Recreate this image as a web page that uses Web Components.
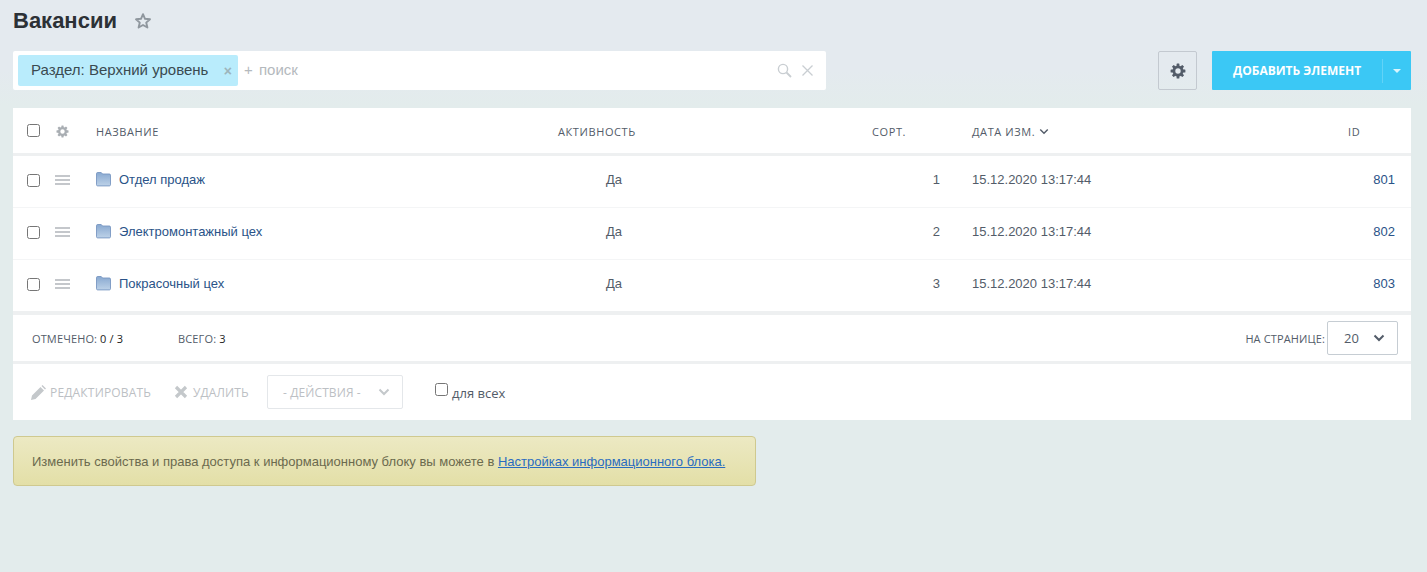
<!DOCTYPE html>
<html lang="ru"><head><meta charset="utf-8"><title>Вакансии</title>
<style>
html,body{margin:0;height:100%}
body{height:572px;overflow:hidden;background:linear-gradient(180deg,#e4eaef 0,#e4eaef 70px,#e3ecec 105px,#e3ecec 100%);font-family:"Liberation Sans",Arial,sans-serif;color:#333}
</style></head><body>
<admin-page>
  <page-title slot="title">Вакансии</page-title>
  <tool-bar slot="tools"></tool-bar>
  <data-grid slot="grid">
    <grid-row kind="head"></grid-row>
    <grid-row name="Отдел продаж" sort="1" num="801"></grid-row>
    <grid-row name="Электромонтажный цех" sort="2" num="802"></grid-row>
    <grid-row name="Покрасочный цех" sort="3" num="803" last></grid-row>
    <grid-stats></grid-stats>
    <grid-actions></grid-actions>
  </data-grid>
  <note-box slot="note">Изменить свойства и права доступа к информационному блоку вы можете в <a href="#">Настройках информационного блока.</a></note-box>
</admin-page>
<script>
const gear=(s,c)=>{let t='';for(let i=0;i<8;i++)t+=`<rect x="6.6" y="0.6" width="2.8" height="3.4" rx=".5" transform="rotate(${i*45} 8 8)"/>`;
return `<svg width="${s}" height="${s}" viewBox="0 0 16 16" fill="${c}" style="display:block">${t}<circle cx="8" cy="8" r="4.1" fill="none" stroke="${c}" stroke-width="2.8"/></svg>`};
const chev=(w,c,sw)=>`<svg width="${w}" height="${Math.round(w*.65)}" viewBox="0 0 12 8" style="display:block"><path d="M1.5 1.5 6 6l4.5-4.5" fill="none" stroke="${c}" stroke-width="${sw}"/></svg>`;
class Base extends HTMLElement{
  render(css,html){const r=this.shadowRoot||this.attachShadow({mode:'open'});r.innerHTML=`<style>${css}</style>${html}`;}
}
customElements.define('admin-page',class extends Base{connectedCallback(){this.render(`
:host{display:flex;flex-direction:column;padding:0 16px 0 13px;box-sizing:border-box;height:572px}
.t{height:51px}.b{height:39px;margin-bottom:18px}.g{margin-bottom:16px}
`,`<div class="t"><slot name="title"></slot></div><div class="b"><slot name="tools"></slot></div><div class="g"><slot name="grid"></slot></div><slot name="note"></slot>`)}});
customElements.define('page-title',class extends Base{connectedCallback(){this.render(`
:host{display:flex;align-items:center;height:41px;font:bold 22px/41px "Liberation Sans",sans-serif;color:#2c3136;gap:17px}
svg{display:block;margin-top:1px}
`,`<slot></slot><svg width="18" height="18" viewBox="0 0 18 18"><path d="M9 2.2l2 4.6 5 .5-3.8 3.3 1.2 4.9L9 13l-4.4 2.5 1.2-4.9L2 7.3l5-.5z" fill="none" stroke="#8f979e" stroke-width="1.9" stroke-linejoin="round"/></svg>`)}});
customElements.define('tool-bar',class extends Base{connectedCallback(){this.render(`
:host{display:flex;align-items:stretch;height:39px}
.f{width:813px;box-sizing:border-box;background:#fff;border-radius:2px;display:flex;align-items:center;padding:4px 0 4px 5px}
.chip{width:220px;box-sizing:border-box;align-self:stretch;background:#b9ecfc;border-radius:2px;display:flex;align-items:center;padding:0 6px 2px 13px;font:15px "Liberation Sans",sans-serif;color:#3a4a50;justify-content:space-between}
.x{font-weight:bold;font-size:14px;color:#9db4bb;margin-top:3px}
.p{margin:0 0 2px 6px;font:15px "Liberation Sans",sans-serif;color:#b4b9bd;flex:1;word-spacing:2px}
.ic{display:flex;gap:9px;align-items:center;padding-right:12px}
.sp{flex:1}
.gb{width:39px;box-sizing:border-box;border:1px solid #c3c9d0;border-radius:2px;display:flex;align-items:center;justify-content:center}
.add{margin-left:15px;width:199px;background:#3bc8f5;color:#fff;border-radius:1px;display:flex;align-items:center;font:bold 12px "Open Sans",sans-serif}
.add .l{width:170px;padding-left:21px;box-sizing:border-box;white-space:nowrap}
.add .d{width:1px;height:24px;background:#62d3f7}
.add .a{flex:1;display:flex;justify-content:center}
.a i{border:4px solid transparent;border-top:4px solid #d9f5fd;border-bottom:0;display:block}
`,`<div class="f"><div class="chip">Раздел: Верхний уровень<span class="x">×</span></div><div class="p">+ поиск</div>
<div class="ic"><svg width="15" height="15" viewBox="0 0 15 15"><circle cx="6" cy="6" r="4.6" fill="none" stroke="#c9ced2" stroke-width="1.4"/><path d="M9.5 9.5 14 14" stroke="#c9ced2" stroke-width="1.8"/></svg><svg width="13" height="13" viewBox="0 0 13 13"><path d="M1.5 1.5l10 10M11.5 1.5l-10 10" stroke="#c9ced2" stroke-width="1.3"/></svg></div></div>
<div class="sp"></div><div class="gb">${gear(16,'#535c69')}</div>
<div class="add"><span class="l">ДОБАВИТЬ ЭЛЕМЕНТ</span><span class="d"></span><span class="a"><i></i></span></div>`)}});
customElements.define('data-grid',class extends Base{connectedCallback(){this.render(`
:host{display:block;background:#fff}
`,`<slot></slot>`)}});
const COLS='28px 41px 462px 112px 202px 68px 32px 376px 47px';
customElements.define('grid-row',class extends Base{connectedCallback(){
 const head=this.getAttribute('kind')==='head';
 const css=`:host{display:grid;grid-template-columns:${COLS};padding-left:14px;align-items:center;box-sizing:border-box;}
 input{margin:0;width:13px;height:13px;display:block}
 .hand{width:15px;height:10px;border-top:2px solid #c4c7cb;border-bottom:2px solid #c4c7cb;position:relative;box-sizing:border-box}
 .hand:after{content:"";position:absolute;left:0;right:0;top:2px;height:2px;background:#c4c7cb}
 .n{display:flex;align-items:center;gap:8px;color:#2a5388}
 .c{text-align:center}.r{text-align:right}
 .hd{font:11px "Open Sans",sans-serif;letter-spacing:.6px;color:#535c69;display:flex;align-items:center;gap:4px;text-transform:uppercase;margin-top:2px}
 .hg{margin:2px 0 0 1px}
 `;
 if(head){this.style.cssText='height:48px;border-bottom:3px solid #eef0f1;';
 this.render(css,`<input type="checkbox"><span class="hg">${gear(13,'#a9aeb3')}</span><span class="hd">Название</span><span class="hd">Активность</span><span></span><span class="hd">Сорт.</span><span></span><span class="hd">Дата изм. ${chev(10,'#535c69',1.7)}</span><span class="hd">ID</span>`);}
 else{const last=this.hasAttribute('last');this.style.cssText=`height:${last?55:52}px;padding-bottom:4px;border-bottom:${last?'4px solid #eef0f1':'1px solid #f4f5f6'};font:13px "Liberation Sans",sans-serif;color:#535c69;`;
 this.render(css,`<input type="checkbox" style="margin-top:2px"><span class="hand"></span><span class="n"><svg width="15" height="15" viewBox="0 0 15 15"><defs><linearGradient id="g" x1="0" y1="0" x2="0" y2="1"><stop offset="0" stop-color="#88a8d0"/><stop offset="1" stop-color="#bdd2e8"/></linearGradient></defs><path d="M.5 3V1.6C.5 1 1 .5 1.6.5h3.6L6.6 2h6.8c.6 0 1.1.5 1.1 1.1v9.7c0 .6-.5 1.1-1.1 1.1H1.6c-.6 0-1.1-.5-1.1-1.1z" fill="url(#g)" stroke="#7896c2" stroke-width=".9"/></svg>${this.getAttribute('name')}</span><span class="c">Да</span><span></span><span class="r">${this.getAttribute('sort')}</span><span></span><span>15.12.2020 13:17:44</span><span class="r" style="color:#2a5388">${this.getAttribute('num')}</span>`);}
}});
customElements.define('grid-stats',class extends Base{connectedCallback(){this.render(`
:host{display:flex;align-items:center;height:49px;box-sizing:border-box;padding:0 13px 0 19px;border-bottom:3px solid #eef0f1;font:11px "Open Sans",sans-serif;color:#535c69;letter-spacing:.13px}
b{font-weight:400;color:#222}
.s{margin-left:55px}.sp{flex:1}
.sel{margin-left:2px;width:71px;height:34px;box-sizing:border-box;border:1px solid #c6cdd3;border-radius:2px;display:flex;align-items:center;justify-content:space-between;padding:0 12px 0 16px;font:13px "Open Sans",sans-serif;letter-spacing:0}
`,`<span>ОТМЕЧЕНО: <b>0 / 3</b></span><span class="s">ВСЕГО: <b>3</b></span><span class="sp"></span><span>НА СТРАНИЦЕ:</span><span class="sel">20 ${chev(12,'#535c69',2)}</span>`)}});
customElements.define('grid-actions',class extends Base{connectedCallback(){this.render(`
:host{display:flex;align-items:center;height:56px;padding-left:18px;font:12px "Open Sans",sans-serif;color:#bcc0c4}
.i{display:flex;align-items:center;gap:4px;white-space:nowrap}
.sel{margin-left:18px;width:136px;height:34px;box-sizing:border-box;border:1px solid #e4e7ea;border-radius:2px;display:flex;align-items:center;justify-content:space-between;padding:0 12px 0 15px;letter-spacing:.1px}
.all{margin-left:32px;display:flex;align-items:flex-start;gap:4px;color:#535c69;font-size:13px}
input{margin:0;width:13px;height:13px;margin-top:0}
.all span{margin-top:1px;margin-left:0}
`,`<span class="i" style="width:125px;letter-spacing:.17px"><svg width="15" height="15" viewBox="0 0 15 15" fill="#c4c8cb"><path d="M0 15l1-4.5L9.5 2l3.5 3.5L4.5 14zM10.5 1l1-1 3.5 3.5-1 1z"/></svg>РЕДАКТИРОВАТЬ</span>
<span class="i" style="margin-left:18px;width:75px;gap:5px;letter-spacing:.1px"><svg width="14" height="14" viewBox="0 0 14 14"><path d="M2 2l10 10M12 2 2 12" stroke="#c4c8cb" stroke-width="3.2"/></svg>УДАЛИТЬ</span>
<span class="sel">- ДЕЙСТВИЯ - ${chev(12,'#c4c8cb',2)}</span><label class="all"><input type="checkbox"><span>для всех</span></label>`)}});
customElements.define('note-box',class extends Base{connectedCallback(){this.render(`
:host{display:flex;align-items:center;width:743px;height:50px;box-sizing:border-box;padding-left:18px;border:1px solid #cfc98f;border-radius:4px;background:linear-gradient(#ece9c3,#e3dfa7);font:13px "Liberation Sans",sans-serif;color:#6b6a4e}
::slotted(a){color:#2a6cc0}
`,`<span><slot></slot></span>`)}});
</script>
</body></html>
